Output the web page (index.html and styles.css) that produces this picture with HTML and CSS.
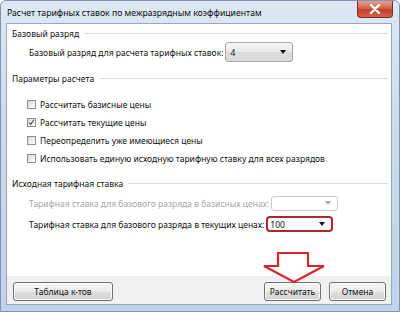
FILE: index.html
```html
<!DOCTYPE html>
<html lang="ru">
<head>
    <meta charset="UTF-8">
    <link rel="stylesheet" href="styles.css">
</head>
<body>

    <div class="window">
        <div class="titlebar">
            <span class="title">Расчет тарифных ставок по межразрядным коэффициентам</span>
            <div class="close-btn">
                <svg width="12" height="10" viewBox="0 0 12 10">
                    <path d="M2 1 L10 9 M10 1 L2 9" stroke="#fff" stroke-width="2.4" stroke-linecap="round"/>
                </svg>
            </div>
        </div>

        <div class="client">
            <div class="content">
                <div class="group-title"><span>Базовый разряд</span></div>
                <div class="field-row first-row">
                    <span class="field-label">Базовый разряд для расчета тарифных ставок:</span>
                    <div class="combo combo-list">4<span class="arrow"></span></div>
                </div>

                <div class="group-title second"><span>Параметры расчета</span></div>
                <div class="checks">
                    <label class="check"><span class="box"></span>Рассчитать базисные цены</label>
                    <label class="check"><span class="box checked">
                        <svg width="9" height="9" viewBox="0 0 9 9"><path d="M1.5 4.5 L3.5 7 L7.5 1" fill="none" stroke="#4a5a78" stroke-width="1.5"/></svg>
                    </span>Рассчитать текущие цены</label>
                    <label class="check"><span class="box"></span>Переопределить уже имеющиеся цены</label>
                    <label class="check"><span class="box"></span>Использовать единую исходную тарифную ставку для всех разрядов</label>
                </div>

                <div class="group-title third"><span>Исходная тарифная ставка</span></div>
                <div class="field-row rate-row disabled">
                    <span class="field-label">Тарифная ставка для базового разряда в базисных ценах:</span>
                    <div class="combo combo-off"><span class="arrow"></span></div>
                </div>
                <div class="field-row rate-row">
                    <span class="field-label">Тарифная ставка для базового разряда в текущих ценах:</span>
                    <div class="combo combo-marked">100<span class="arrow"></span></div>
                </div>

                <svg class="pointer" width="66" height="34" viewBox="0 0 66 34">
                    <path d="M17 2 H47 V15 H63 L33 31 L3 15 H17 Z" fill="#fff" stroke="#d8262c" stroke-width="2.2" stroke-linejoin="miter"/>
                </svg>
            </div>

            <div class="footer">
                <button class="btn btn-wide">Таблица к-тов</button>
                <div class="footer-right">
                    <button class="btn">Рассчитать</button>
                    <button class="btn">Отмена</button>
                </div>
            </div>
        </div>
    </div>

</body>
</html>
```

FILE: styles.css
```css
body {
    margin: 0;
    padding: 0;
    font-family: 'Noto Sans', 'Open Sans', sans-serif;
    font-size: 8.5px;
    color: #111;
    background: #ffffff;
}

.window {
    width: 400px;
    height: 312px;
    box-sizing: border-box;
    padding: 0 7px 6px 5px;
    background: linear-gradient(to bottom, #dde8f4 0%, #cbdaec 40%, #c1d3e9 100%);
    border: 1px solid #8193aa;
    border-radius: 6px 6px 0 0;
    display: flex;
    flex-direction: column;
}

.titlebar {
    height: 22px;
    display: flex;
    align-items: flex-start;
    justify-content: space-between;
}

.title {
    font-size: 8.7px;
    color: #0c0c0c;
    padding-top: 6px;
    padding-left: 1px;
}

.close-btn {
    width: 36px;
    height: 17px;
    margin-right: -1px;
    border: 1px solid #7a2c25;
    border-top: none;
    border-radius: 0 0 4px 4px;
    background: linear-gradient(to bottom, #e3a190 0%, #d3624c 45%, #c0402a 55%, #d6614a 100%);
    display: flex;
    align-items: center;
    justify-content: center;
    box-sizing: border-box;
}

.client {
    flex: 1;
    background: #ffffff;
    border: 1px solid #95a8c0;
    display: flex;
    flex-direction: column;
}

.content {
    flex: 1;
    position: relative;
    padding: 0 3px 0 5px;
}

.group-title {
    height: 18px;
    display: flex;
    align-items: center;
}

.group-title::after {
    content: "";
    flex: 1;
    height: 1px;
    margin-left: 5px;
    background: #d9dee5;
}

.group-title.second {
    margin-top: 7px;
}

.group-title.third {
    margin-top: 7px;
}

.field-row {
    display: flex;
    align-items: center;
    padding-left: 17px;
    gap: 2px;
}

.first-row {
    height: 20px;
}

.checks {
    margin-top: 8px;
    padding-left: 15px;
}

.check {
    height: 18px;
    display: flex;
    align-items: center;
    gap: 4px;
}

.box {
    width: 7px;
    height: 7px;
    border: 1px solid #8e8f8f;
    background: linear-gradient(135deg, #d6d6d6 0%, #f0f0f0 60%, #ffffff 100%);
    display: flex;
    align-items: center;
    justify-content: center;
}

.rate-row {
    height: 18px;
    margin-top: 2px;
}

.rate-row + .rate-row {
    margin-top: 3px;
}

.disabled .field-label {
    color: #a6a6a6;
}

.combo {
    position: relative;
    box-sizing: border-box;
    border: 1px solid #a8a8a8;
    border-radius: 3px;
    padding-left: 4px;
    display: flex;
    align-items: center;
}

.combo-list {
    width: 68px;
    height: 20px;
    background: linear-gradient(to bottom, #f4f4f4 0%, #ebebeb 50%, #dddddd 51%, #d9d9d9 100%);
}

.combo-off {
    width: 67px;
    height: 15px;
    border-color: #c9c9c9;
    background: #ffffff;
}

.combo-off .arrow {
    border-top-color: #b0b0b0;
}

.combo-marked {
    width: 67px;
    height: 16px;
    border: 2px solid #b3242d;
    border-radius: 4px;
    background: #ffffff;
    padding-left: 2px;
}

.arrow {
    position: absolute;
    right: 6px;
    top: 50%;
    margin-top: -2px;
    width: 0;
    height: 0;
    border-left: 3px solid transparent;
    border-right: 3px solid transparent;
    border-top: 4px solid #111;
}

.pointer {
    position: absolute;
    left: 254px;
    top: 227px;
}

.footer {
    height: 28px;
    box-sizing: border-box;
    padding: 2px 5px 0 6px;
    background: #f0f0f0;
    display: flex;
    align-items: center;
    justify-content: space-between;
}

.footer-right {
    display: flex;
    gap: 8px;
}

.btn {
    font-family: 'Noto Sans', 'Open Sans', sans-serif;
    font-size: 8.5px;
    color: #111;
    width: 57px;
    height: 19px;
    padding: 0;
    border: 1px solid #707070;
    border-radius: 3px;
    background: linear-gradient(to bottom, #f4f4f4 0%, #ececec 48%, #dedede 52%, #d3d3d3 100%);
    box-shadow: inset 0 0 0 1px #fcfcfc;
}

.btn-wide {
    width: 100px;
}
```
